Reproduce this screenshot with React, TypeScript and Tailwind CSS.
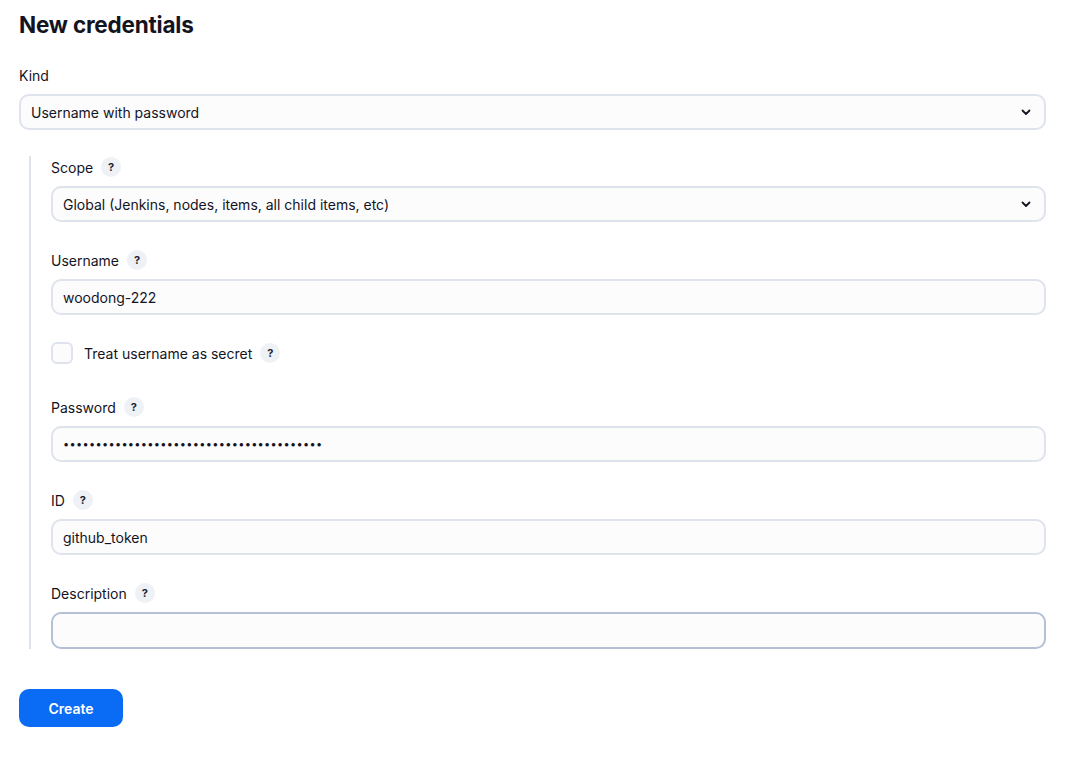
import React from "react";

function HelpBadge() {
  return (
    <span className="ml-2 inline-flex h-5 w-5 items-center justify-center rounded-full bg-[#eef1f6] text-[11px] font-bold text-[#1f2330]">
      ?
    </span>
  );
}

function Chevron() {
  return (
    <svg width="12" height="12" viewBox="0 0 12 12" fill="none" className="shrink-0">
      <path d="M2.5 4.5 6 8l3.5-3.5" stroke="#14141f" strokeWidth="1.8" strokeLinecap="round" strokeLinejoin="round" />
    </svg>
  );
}

function FieldLabel({ text, help = true }: { text: string; help?: boolean }) {
  return (
    <div className="flex h-5 items-center text-[14px] text-[#14141f]">
      <span>{text}</span>
      {help && <HelpBadge />}
    </div>
  );
}

function Select({ value }: { value: string }) {
  return (
    <div className="flex h-[36px] items-center justify-between rounded-[10px] border-2 border-[#dfe3ec] bg-[#fcfcfd] pl-[10px] pr-[12px] text-[14px] text-[#14141f]">
      <span>{value}</span>
      <Chevron />
    </div>
  );
}

function TextInput({ value, strong = false, masked = false }: { value?: string; strong?: boolean; masked?: boolean }) {
  return (
    <div
      className={`flex items-center rounded-[10px] border-2 bg-[#fcfcfd] px-[10px] text-[#14141f] ${
        strong ? "h-[37px] border-[#b3c0d6]" : "h-[36px] border-[#dfe3ec]"
      } ${masked ? "text-[11px] tracking-[0.3px]" : "text-[14px]"}`}
    >
      {value}
    </div>
  );
}

export default function App() {
  const dots = "•".repeat(40);

  return (
    <div className="min-h-[760px] bg-white px-[19px] pt-[10px] font-['Inter',sans-serif] text-[#14141f]">
      <h1 className="text-[22.5px] font-bold leading-[30px] tracking-[-0.2px]">New credentials</h1>

      <div className="mt-[25px]">
        <FieldLabel text="Kind" help={false} />
        <div className="mt-[9px]">
          <Select value="Username with password" />
        </div>
      </div>

      {/* nested fields for the chosen credential kind */}
      <div className="ml-[10px] mt-[26px] border-l-2 border-[#dfe3ec] pl-[20px] pt-px">
        <FieldLabel text="Scope" />
        <div className="mt-[9px]">
          <Select value="Global (Jenkins, nodes, items, all child items, etc)" />
        </div>

        <div className="mt-[28px]">
          <FieldLabel text="Username" />
          <div className="mt-[9px]">
            <TextInput value="woodong-222" />
          </div>
        </div>

        <div className="mt-[27px] flex items-center">
          <span className="h-[22px] w-[22px] rounded-[6px] border-2 border-[#dfe3ec] bg-[#fcfcfd]" />
          <span className="ml-[11px] text-[14px]">Treat username as secret</span>
          <HelpBadge />
        </div>

        <div className="mt-[33px]">
          <FieldLabel text="Password" />
          <div className="mt-[9px]">
            <TextInput value={dots} masked />
          </div>
        </div>

        <div className="mt-[28px]">
          <FieldLabel text="ID" />
          <div className="mt-[9px]">
            <TextInput value="github_token" />
          </div>
        </div>

        <div className="mt-[28px]">
          <FieldLabel text="Description" />
          <div className="mt-[9px]">
            <TextInput strong />
          </div>
        </div>
      </div>

      <button className="mt-[40px] h-[38px] w-[104px] rounded-[10px] bg-[#0a6cf5] text-[14px] font-semibold text-white">
        Create
      </button>
    </div>
  );
}
